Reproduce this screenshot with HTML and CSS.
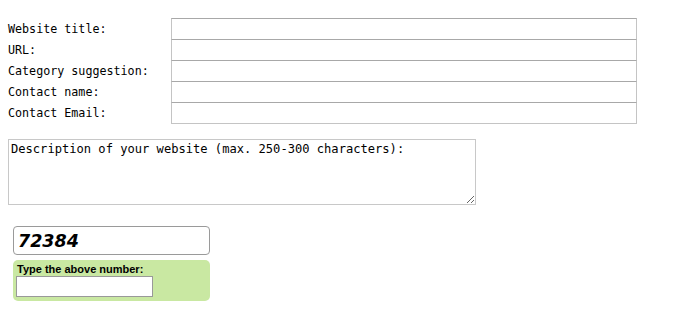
FILE: index.html
```html
<!DOCTYPE html>
<html lang="en">
<head>
    <meta charset="UTF-8">
    <meta name="viewport" content="width=device-width, initial-scale=1.0">
    <title>Submit your website</title>
    <link rel="stylesheet" href="styles.css">
</head>
<body>

<form class="submit-form">
    <div class="fields">
        <label for="title">Website title:</label>
        <input type="text" id="title" name="title">

        <label for="url">URL:</label>
        <input type="text" id="url" name="url">

        <label for="category">Category suggestion:</label>
        <input type="text" id="category" name="category">

        <label for="contactName">Contact name:</label>
        <input type="text" id="contactName" name="contactName">

        <label for="contactEmail">Contact Email:</label>
        <input type="text" id="contactEmail" name="contactEmail">
    </div>

    <textarea class="description" name="description">Description of your website (max. 250-300 characters):</textarea>

    <div class="captcha">
        <div class="captcha-number">72384</div>
        <div class="captcha-answer">
            <label for="captcha">Type the above number:</label>
            <input type="text" id="captcha" name="captcha">
        </div>
    </div>
</form>

</body>
</html>
```

FILE: styles.css
```css
body {
    margin: 8px;
    font-family: "DejaVu Sans Mono", monospace;
    font-size: 11.7px;
    color: #000;
    background: #fff;
}
.fields {
    display: grid;
    grid-template-columns: 163px 466px;
    grid-auto-rows: 21.2px;
    padding-top: 10px;
    align-items: center;
}
.fields label {
    line-height: 21px;
    padding-top: 1px;
}
.fields input {
    height: 22.2px;
    margin: 0;
    box-sizing: border-box;
    border: 1px solid #c4c4c4;
    border-top-color: #a8a8a8;
    font-family: inherit;
}
.description {
    display: block;
    width: 468px;
    height: 66px;
    margin: 15px 0 0 0;
    padding: 2px 2px;
    box-sizing: border-box;
    border: 1px solid #c8c8c8;
    font-family: "DejaVu Sans Mono", monospace;
    font-size: 12.1px;
    line-height: 14px;
    resize: both;
}
.captcha {
    width: 197px;
    margin: 21px 0 0 5px;
}
.captcha-number {
    height: 29px;
    box-sizing: border-box;
    border: 1px solid #9a9a9a;
    border-radius: 4px;
    padding-left: 4px;
    font-family: "DejaVu Sans", Verdana, sans-serif;
    font-weight: bold;
    font-style: italic;
    font-size: 17.5px;
    line-height: 28px;
}
.captcha-answer {
    margin-top: 5px;
    height: 41px;
    box-sizing: border-box;
    padding: 3px 3px 0 3px;
    background-color: #c9e8a2;
    border-radius: 5px;
    font-family: "Liberation Sans", Arial, sans-serif;
}
.captcha-answer label {
    display: block;
    font-size: 11px;
    font-weight: bold;
    line-height: 13px;
    padding-left: 1px;
}
.captcha-answer input {
    display: block;
    width: 137px;
    height: 21px;
    margin: 0;
    box-sizing: border-box;
    border: 1px solid #999;
    background: #fff;
}
```
